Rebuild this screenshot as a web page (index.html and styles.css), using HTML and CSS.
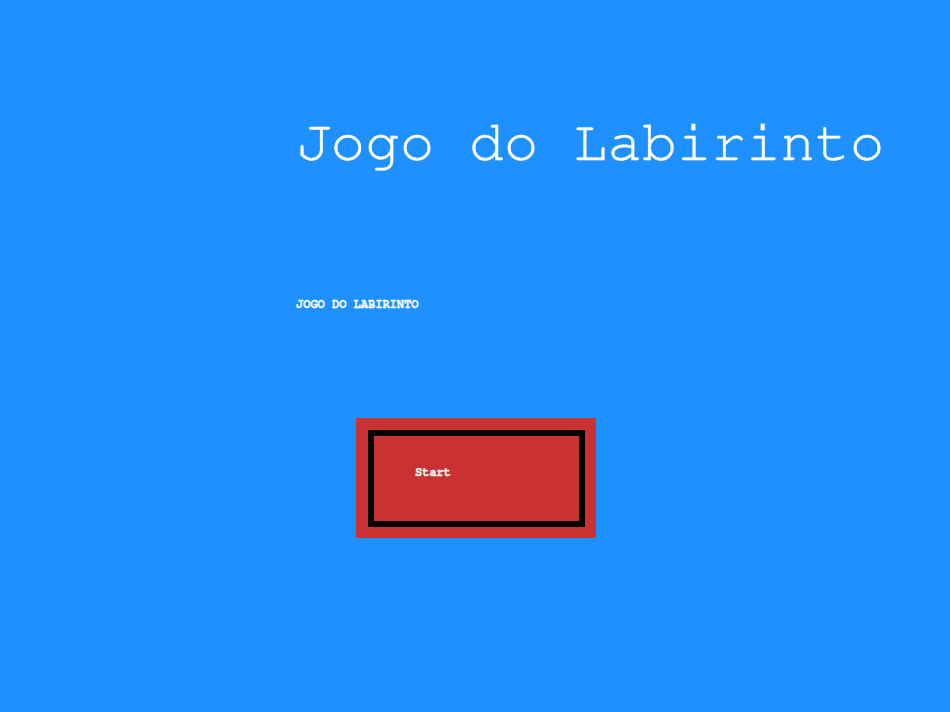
FILE: index.html
```html
<!DOCTYPE html>
<html>
<head>
<meta charset="utf-8">
<link rel="stylesheet" href="styles.css">
</head>
<body>
<main class="page">
  <h1 class="title">Jogo do Labirinto</h1>
  <p class="subtitle">JOGO DO LABIRINTO</p>
  <div class="button-wrap">
    <button class="start-btn"><span class="start-label">Start</span></button>
  </div>
</main>
</body>
</html>
```
FILE: styles.css
```css
html, body {
  margin: 0;
  padding: 0;
  background: #1e90ff;
  width: 950px;
  height: 712px;
  overflow: hidden;
}
.page {
  padding: 110px 0 0 296px;
  display: flex;
  flex-direction: column;
  align-items: flex-start;
}
.title {
  margin: 0;
  font-family: "Nimbus Mono PS", "FreeMono", "Courier New", "Liberation Mono", monospace;
  font-weight: normal;
  font-size: 57.7px;
  line-height: 66px;
  color: #ffffff;
  -webkit-text-stroke: 0.5px #ffffff;
}
.subtitle {
  margin: 121px 0 0 0;
  font-family: "Nimbus Mono PS", "FreeMono", "Courier New", "Liberation Mono", monospace;
  font-weight: bold;
  font-size: 12px;
  line-height: 14px;
  color: #ffffff;
  -webkit-text-stroke: 0.3px #ffffff;
}
.button-wrap {
  margin: 107px 0 0 60px;
  width: 240px;
  height: 120px;
  background: #c83232;
  padding: 12px 0 0 12px;
  box-sizing: border-box;
}
.start-btn {
  width: 217px;
  height: 97px;
  box-sizing: border-box;
  border: 6px solid #000000;
  background: #c83232;
  padding: 29px 0 0 41px;
  margin: 0;
  display: flex;
  align-items: flex-start;
  cursor: pointer;
}
.start-label {
  font-family: "Nimbus Mono PS", "FreeMono", "Courier New", "Liberation Mono", monospace;
  font-weight: bold;
  font-size: 12px;
  line-height: 14px;
  color: #ffffff;
  -webkit-text-stroke: 0.3px #ffffff;
}
```
